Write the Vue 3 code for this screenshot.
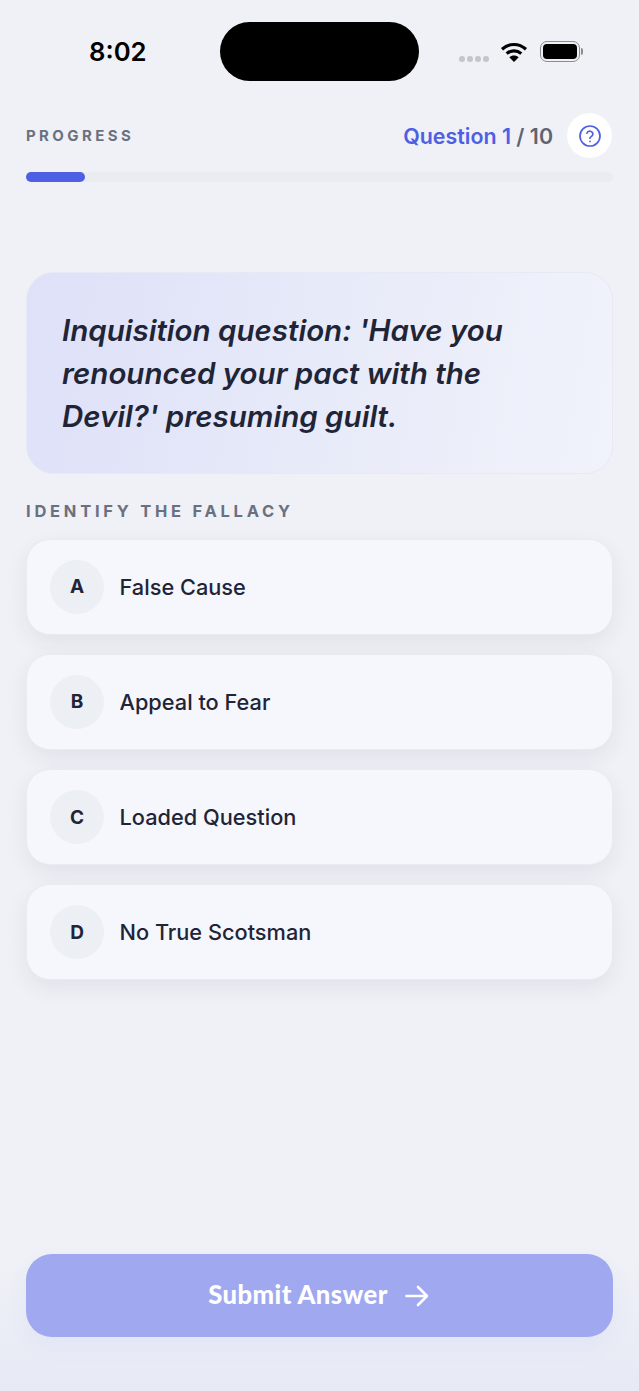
<script setup>
const options = [
  { key: 'A', text: 'False Cause' },
  { key: 'B', text: 'Appeal to Fear' },
  { key: 'C', text: 'Loaded Question' },
  { key: 'D', text: 'No True Scotsman' }
]
</script>

<template>
  <div class="page">
    <div class="status">
      <span class="time">8:02</span>
      <div class="island"></div>
      <div class="status-icons">
        <div class="dots"><i></i><i></i><i></i><i></i></div>
        <svg class="wifi" width="28" height="20" viewBox="0 0 28 20">
          <path d="M2 7.2C9.2 .9 18.8 .9 26 7.2" fill="none" stroke="#000" stroke-width="3.2" />
          <path d="M6.7 11.6C11 7.9 17 7.9 21.3 11.6" fill="none" stroke="#000" stroke-width="3.2" />
          <path d="M9.3 15.2 14 20l4.7-4.8C16 12.8 12 12.8 9.3 15.2Z" fill="#000" />
        </svg>
        <div class="battery"><div class="cell"></div></div>
        <div class="nub"></div>
      </div>
    </div>

    <div class="progress-head">
      <span class="progress-label">PROGRESS</span>
      <div class="progress-right">
        <span class="count"><span class="current">Question 1</span> / 10</span>
        <button class="help" aria-label="Help">
          <svg width="24" height="24" viewBox="0 0 24 24" fill="none" stroke="#4f5fe3" stroke-width="1.7" stroke-linecap="round" stroke-linejoin="round">
            <circle cx="12" cy="12" r="10" />
            <path d="M8.9 9.2a3.1 3.1 0 0 1 6 1c0 2-3 2.6-3 4" />
            <path d="M12 17.4h.01" />
          </svg>
        </button>
      </div>
    </div>
    <div class="track"><div class="fill"></div></div>

    <div class="question">
      Inquisition question: 'Have you renounced your pact with the Devil?' presuming guilt.
    </div>

    <div class="section-label">IDENTIFY THE FALLACY</div>

    <div class="options">
      <div v-for="o in options" :key="o.key" class="option">
        <div class="badge">{{ o.key }}</div>
        <span class="option-text">{{ o.text }}</span>
      </div>
    </div>

    <div class="footer">
      <button class="submit">
        <span class="submit-text">Submit Answer</span>
        <svg width="28" height="28" viewBox="0 0 28 28" fill="none" stroke="#fff" stroke-width="2.6" stroke-linecap="round" stroke-linejoin="round">
          <path d="M3.5 14h20" />
          <path d="M15 5l9 9-9 9" />
        </svg>
      </button>
    </div>
  </div>
</template>

<style>
html, body { margin: 0; background: #eff1f6; }
</style>

<style scoped>
.page {
  box-sizing: border-box;
  width: 639px;
  height: 1391px;
  padding: 0 26px;
  display: flex;
  flex-direction: column;
  font-family: Inter, "Liberation Sans", sans-serif;
  background: #eff1f6;
  overflow: hidden;
}
.status {
  height: 113px;
  flex: none;
  display: flex;
  margin: 0 -26px;
  position: relative;
}
.time {
  position: absolute;
  left: 89px;
  top: 36px;
  font-size: 25.7px;
  line-height: 32px;
  font-weight: 600;
  color: #000;
}
.island {
  position: absolute;
  left: 220px;
  top: 22px;
  width: 199px;
  height: 59px;
  border-radius: 30px;
  background: #000;
}
.status-icons {
  position: absolute;
  left: 459px;
  top: 41px;
  display: flex;
  align-items: center;
}
.dots { display: flex; gap: 2.5px; margin-top: 14px; }
.dots i { width: 5.5px; height: 6px; border-radius: 50%; background: #c4c6ca; }
.wifi { margin-left: 11px; }
.battery {
  box-sizing: border-box;
  width: 40px;
  height: 21px;
  margin-left: 12px;
  border: 1.5px solid #8c8c8e;
  border-radius: 7px;
  padding: 2px;
}
.cell { width: 100%; height: 100%; background: #000; border-radius: 4px; }
.nub { width: 2px; height: 7px; background: #8c8c8e; border-radius: 0 2px 2px 0; margin-left: 1px; }

.progress-head {
  display: flex;
  justify-content: space-between;
  align-items: center;
  height: 45px;
  flex: none;
}
.progress-label {
  font-size: 15px;
  font-weight: 700;
  letter-spacing: 3.4px;
  color: #6b7080;
}
.progress-right { display: flex; align-items: center; gap: 14px; margin-right: 1px; }
.count { font-size: 21.4px; font-weight: 600; color: #5f6472; }
.current { color: #4f5fe3; }
.help {
  width: 45px;
  height: 45px;
  border: 0;
  padding: 0;
  border-radius: 50%;
  background: #fff;
  display: flex;
  align-items: center;
  justify-content: center;
}
.track {
  height: 10px;
  margin-top: 14px;
  border-radius: 5px;
  background: #e9ecf1;
  flex: none;
}
.fill { width: 10%; height: 100%; border-radius: 5px; background: #4f5fe3; }

.question {
  box-sizing: border-box;
  margin-top: 90px;
  height: 202px;
  flex: none;
  padding: 36px 36px 0 35px;
  border: 1px solid #e7e9f5;
  border-radius: 28px;
  background: linear-gradient(100deg, #dee1f8 0%, #e7eaf8 50%, #f1f3fb 100%);
  font-size: 29.5px;
  line-height: 43px;
  font-weight: 600;
  font-style: italic;
  color: #1f2537;
}
.section-label {
  margin-top: 27px;
  font-size: 16.5px;
  line-height: 20px;
  font-weight: 700;
  letter-spacing: 3.75px;
  color: #6b7080;
}
.options {
  margin-top: 17.5px;
  display: flex;
  flex-direction: column;
  gap: 19.3px;
}
.option {
  box-sizing: border-box;
  height: 96px;
  padding: 0 23px;
  display: flex;
  align-items: center;
  gap: 15.5px;
  border: 1px solid #e9ebf1;
  border-radius: 24px;
  background: #f5f7fc;
  box-shadow: 0 8px 22px rgba(30, 40, 70, 0.07);
}
.badge {
  width: 54px;
  height: 54px;
  border-radius: 50%;
  background: #eceff4;
  display: flex;
  align-items: center;
  justify-content: center;
  font-size: 19px;
  font-weight: 700;
  color: #1f2537;
  flex: none;
}
.option-text { font-size: 21.75px; font-weight: 500; color: #1f2537; }

.footer {
  margin: auto -26px 0;
  padding: 0 26px 54px;
  background: linear-gradient(180deg, #eff1f6 0%, #e7eaf5 100%);
}
.submit {
  width: 100%;
  height: 83px;
  border: 0;
  border-radius: 26px;
  background: #a0a9ef;
  color: #fff;
  display: flex;
  align-items: center;
  justify-content: center;
  gap: 15px;
  font-family: Lato, "Noto Sans", sans-serif;
  font-size: 25.6px;
  font-weight: 900;
  letter-spacing: 0.45px;
  box-shadow: 0 10px 24px rgba(79, 95, 227, 0.05);
}
.submit-text { padding-bottom: 3px; }
</style>
